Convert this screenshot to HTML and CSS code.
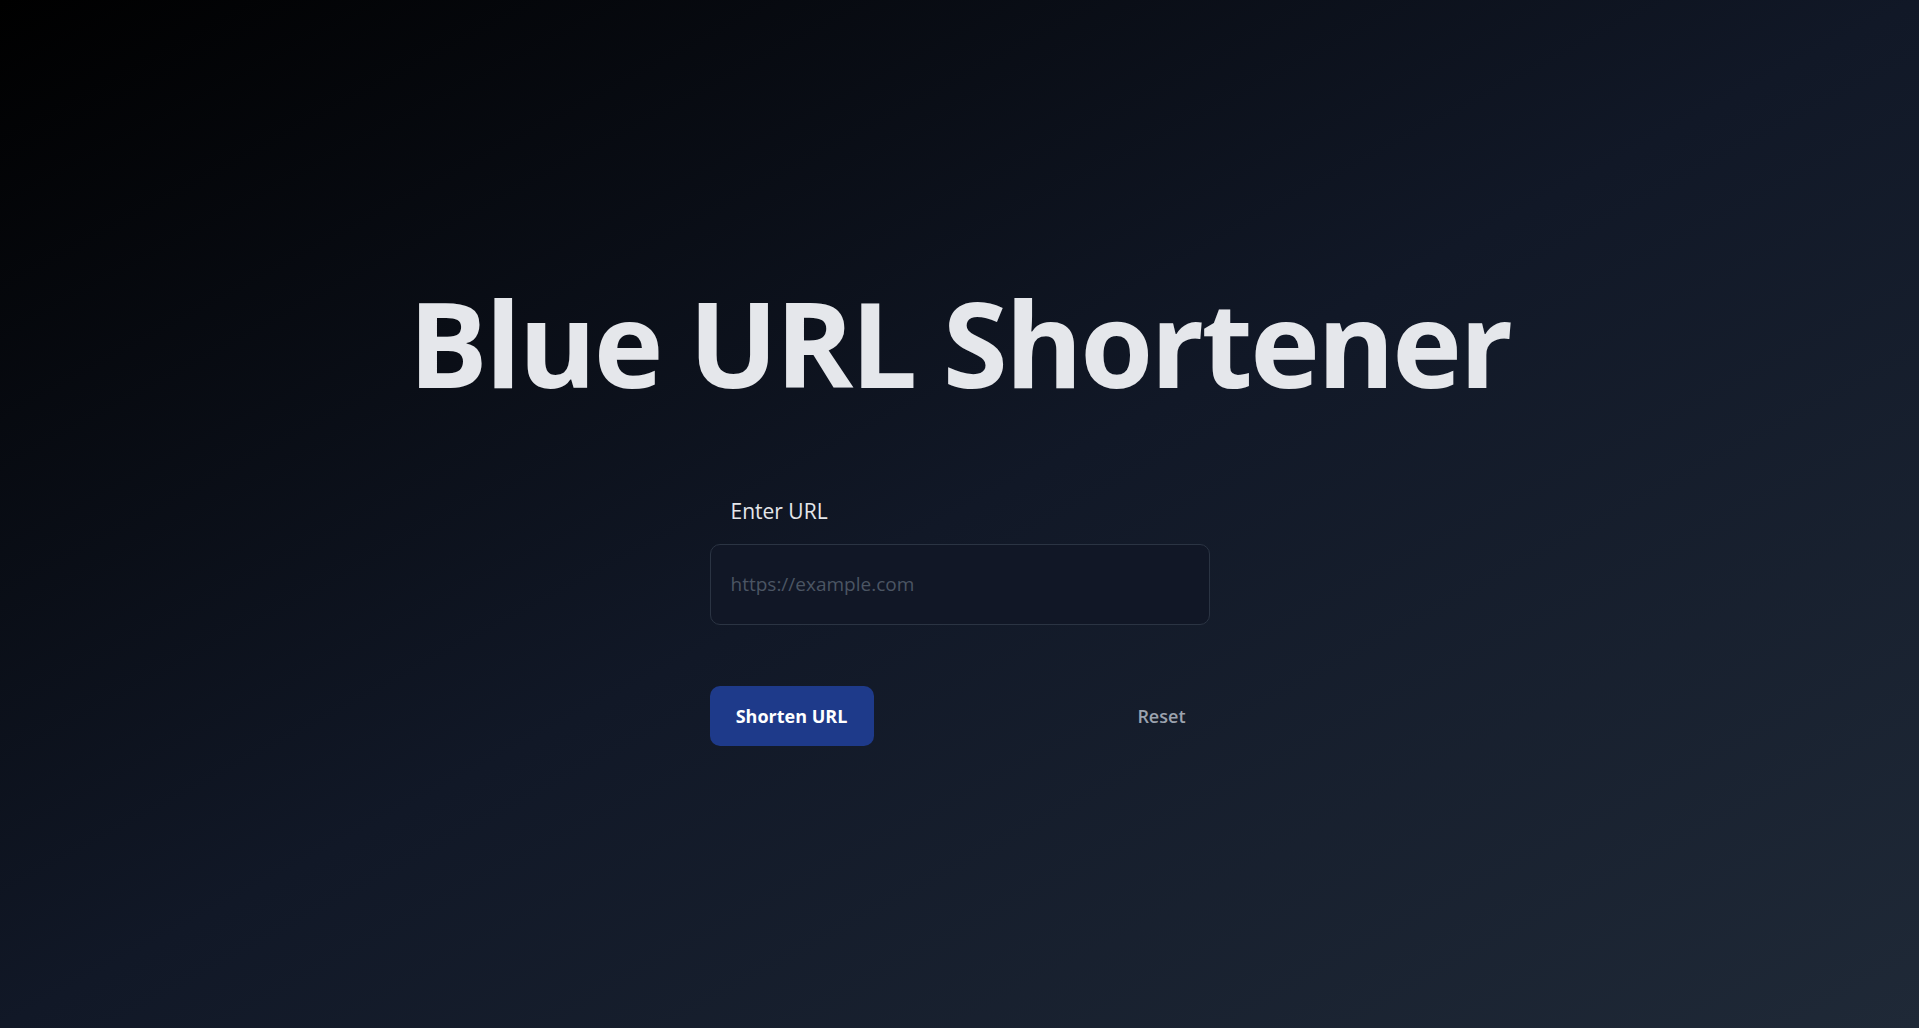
FILE: index.html
```html
<!DOCTYPE html>
<html lang="en">
<head>
<meta charset="utf-8">
<title>Blue URL Shortener</title>
<link rel="stylesheet" href="styles.css">
</head>
<body>
<main class="page">
  <div class="content">
    <h1 class="title">Blue URL Shortener</h1>
    <form class="form" onsubmit="return false;">
      <label class="label" for="url">Enter URL</label>
      <input class="input" id="url" type="text" placeholder="https://example.com">
      <div class="actions">
        <button class="btn-primary" type="submit">Shorten URL</button>
        <button class="btn-reset" type="reset">Reset</button>
      </div>
    </form>
  </div>
</main>
</body>
</html>
```

FILE: styles.css
```css
* { box-sizing: border-box; }
html, body { margin: 0; padding: 0; }
body {
  font-family: "Open Sans", "Noto Sans", sans-serif;
  color: #e5e7eb;
}
.page {
  min-height: 100vh;
  display: flex;
  align-items: center;
  justify-content: center;
  background: linear-gradient(to bottom right, #000000 0%, #111827 50%, #1f2937 100%);
}
.content {
  display: flex;
  flex-direction: column;
  align-items: center;
}
.title {
  margin: 0 0 91px 0;
  font-size: 118px;
  line-height: 120px;
  font-weight: 700;
  color: #e5e7eb;
  letter-spacing: -2.6px;
}
.form {
  width: 500px;
  display: flex;
  flex-direction: column;
}
.label {
  padding-left: 21px;
  font-size: 21px;
  line-height: 35px;
  color: #e5e7eb;
  margin-bottom: 15px;
}
.input {
  height: 81px;
  width: 100%;
  padding: 0 20px;
  border: 1px solid #2b3443;
  border-radius: 10px;
  background: #111726;
  color: #e5e7eb;
  font-family: inherit;
  font-size: 19px;
  outline: none;
}
.input::placeholder { color: #4b5563; }
.actions {
  margin-top: 61px;
  display: flex;
  justify-content: space-between;
  align-items: center;
}
.btn-primary {
  height: 60px;
  width: 164px;
  border: 0;
  border-radius: 10px;
  background: #1e3a8a;
  color: #ffffff;
  font-family: inherit;
  font-size: 18px;
  font-weight: 700;
  cursor: pointer;
}
.btn-reset {
  height: 60px;
  padding: 0 24px;
  border: 0;
  background: transparent;
  color: #9ca3af;
  font-family: inherit;
  font-size: 18px;
  font-weight: 600;
  cursor: pointer;
}
```
